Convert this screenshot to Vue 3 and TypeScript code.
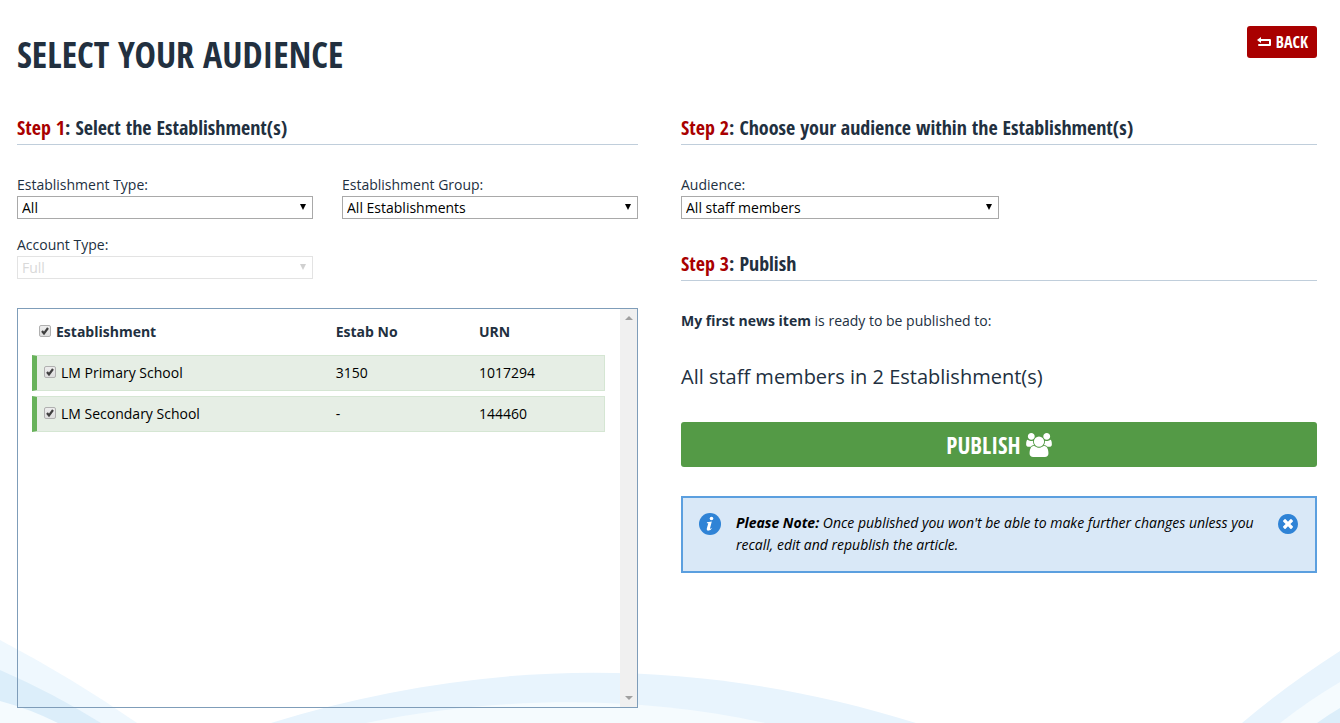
<script setup lang="ts">
import { computed, ref } from 'vue'

interface Establishment {
  name: string
  estabNo: string
  urn: string
  selected: boolean
}

const establishments = ref<Establishment[]>([
  { name: 'LM Primary School', estabNo: '3150', urn: '1017294', selected: true },
  { name: 'LM Secondary School', estabNo: '-', urn: '144460', selected: true },
])

const establishmentType = ref('All')
const establishmentGroup = ref('All Establishments')
const accountType = ref('Full')
const audience = ref('All staff members')
const noteVisible = ref(true)

const selectedCount = computed(() => establishments.value.filter((e) => e.selected).length)
const allSelected = computed({
  get: () => establishments.value.every((e) => e.selected),
  set: (value: boolean) => establishments.value.forEach((e) => (e.selected = value)),
})
</script>

<template>
  <div class="page">
    <svg class="waves" viewBox="0 0 1340 84" preserveAspectRatio="none" aria-hidden="true">
      <path fill="#eff8fe" d="M0 1Q74 40 137 84H0Z" />
      <path fill="#dceefa" d="M0 31Q53 54 101 84H0Z" />
      <path fill="#f5fbfe" d="M0 62Q30 70 58 84H0Z" />
      <path fill="#e8f4fd" d="M271 84C480 19 695 15 916 84Z" />
      <path fill="#f5fbfe" d="M366 84C495 58 630 55 765 84Z" />
      <path fill="#e8f4fd" d="M1242 84Q1284 48 1340 12V84Z" />
      <path fill="#f5fbfe" d="M1280 84Q1308 62 1340 43V84Z" />
      <path fill="#dceefa" d="M1317 84Q1328 76 1340 69V84Z" />
    </svg>

    <header class="top">
      <h1>SELECT YOUR AUDIENCE</h1>
      <button type="button" class="back">
        <svg viewBox="0 0 14 10" width="14" height="10" aria-hidden="true">
          <path d="M3 3H13V8H2" fill="none" stroke="#fff" stroke-width="2" stroke-linejoin="round" stroke-linecap="round" />
          <path d="M4 0V6L0 3Z" fill="#fff" />
        </svg>
        <span>BACK</span>
      </button>
    </header>

    <main class="columns">
      <section>
        <h2><em>Step 1</em>: Select the Establishment(s)</h2>
        <div class="filters">
          <div class="field">
            <label for="type">Establishment Type:</label>
            <div class="select">
              <select id="type" v-model="establishmentType"><option>All</option></select>
              <svg viewBox="0 0 6 6" aria-hidden="true"><path d="M0 0H6L3 6Z" /></svg>
            </div>
          </div>
          <div class="field">
            <label for="group">Establishment Group:</label>
            <div class="select">
              <select id="group" v-model="establishmentGroup"><option>All Establishments</option></select>
              <svg viewBox="0 0 6 6" aria-hidden="true"><path d="M0 0H6L3 6Z" /></svg>
            </div>
          </div>
          <div class="field">
            <label for="account">Account Type:</label>
            <div class="select disabled">
              <select id="account" v-model="accountType" disabled><option>Full</option></select>
              <svg viewBox="0 0 6 6" aria-hidden="true"><path d="M0 0H6L3 6Z" /></svg>
            </div>
          </div>
        </div>

        <div class="list">
          <div class="list-body">
            <table>
              <thead>
                <tr>
                  <th class="name">
                    <label><input v-model="allSelected" type="checkbox" /><span>Establishment</span></label>
                  </th>
                  <th class="number">Estab No</th>
                  <th>URN</th>
                </tr>
              </thead>
              <tbody>
                <tr v-for="item in establishments" :key="item.urn">
                  <td>
                    <label><input v-model="item.selected" type="checkbox" /><span>{{ item.name }}</span></label>
                  </td>
                  <td>{{ item.estabNo }}</td>
                  <td>{{ item.urn }}</td>
                </tr>
              </tbody>
            </table>
          </div>
          <div class="scrollbar" aria-hidden="true">
            <svg viewBox="0 0 8 4"><path d="M0 4L4 0L8 4Z" /></svg>
            <svg viewBox="0 0 8 4"><path d="M0 0L4 4L8 0Z" /></svg>
          </div>
        </div>
      </section>

      <section>
        <h2><em>Step 2</em>: Choose your audience within the Establishment(s)</h2>
        <div class="field audience">
          <label for="audience">Audience:</label>
          <div class="select">
            <select id="audience" v-model="audience"><option>All staff members</option></select>
            <svg viewBox="0 0 6 6" aria-hidden="true"><path d="M0 0H6L3 6Z" /></svg>
          </div>
        </div>

        <h2 class="third"><em>Step 3</em>: Publish</h2>
        <p class="ready"><strong>My first news item</strong> is ready to be published to:</p>
        <p class="target">{{ audience }} in {{ selectedCount }} Establishment(s)</p>
        <button type="button" class="publish">
          <span>PUBLISH</span>
          <svg viewBox="0 0 1920 1792" width="26" height="24" aria-hidden="true">
            <path fill="#fff" d="M593 896q-162 5-265 128h-134q-82 0-138-40.500t-56-118.500q0-353 124-353 6 0 43.500 21t97.500 42.500 119 21.500q67 0 133-23-5 37-5 66 0 139 81 256zm1071 637q0 120-73 189.500t-194 69.500h-874q-121 0-194-69.500t-73-189.500q0-53 3.500-103.500t14-109 26.500-108.500 43-97.500 62-81 85.500-53.500 111.500-20q10 0 43 21.500t73 48 107 48 135 21.500 135-21.500 107-48 73-48 43-21.500q61 0 111.500 20t85.500 53.500 62 81 43 97.500 26.500 108.500 14 109 3.500 103.500zm-1024-1277q0 106-75 181t-181 75-181-75-75-181 75-181 181-75 181 75 75 181zm704 384q0 159-112.500 271.500t-271.500 112.500-271.500-112.500-112.500-271.500 112.500-271.500 271.500-112.500 271.500 112.500 112.500 271.500zm576 225q0 78-56 118.500t-138 40.500h-134q-103-123-265-128 81-117 81-256 0-29-5-66 66 23 133 23 59 0 119-21.500t97.500-42.500 43.500-21q124 0 124 353zm-128-609q0 106-75 181t-181 75-181-75-75-181 75-181 181-75 181 75 75 181z" />
          </svg>
        </button>

        <div v-if="noteVisible" class="note" role="note">
          <svg viewBox="0 0 22 22" width="22" height="22" aria-hidden="true">
            <circle cx="11" cy="11" r="11" fill="#2f83d6" />
            <circle cx="12.500" cy="5.500" r="1.800" fill="#fff" />
            <path d="M8 9.200L12.800 8.500L11 15.300Q11 16.200 13.300 14.800Q11.800 17.800 9 17.800Q7.300 17.600 7.800 15.500L9.300 10.300H7.800Z" fill="#fff" />
          </svg>
          <p><strong>Please Note:</strong> Once published you won't be able to make further changes unless you recall, edit and republish the article.</p>
          <button type="button" aria-label="Dismiss note" @click="noteVisible = false">
            <svg viewBox="128 128 1536 1536" width="20" height="20" aria-hidden="true">
              <circle cx="896" cy="896" r="700" fill="#fff" />
              <path fill="#2f83d6" d="M1277 1122q0-26-19-45l-181-181 181-181q19-19 19-45 0-27-19-46l-90-90q-19-19-46-19-26 0-45 19l-181 181-181-181q-19-19-45-19-27 0-46 19l-90 90q-19 19-19 46 0 26 19 45l181 181-181 181q-19 19-19 45 0 27 19 46l90 90q19 19 46 19 26 0 45-19l181-181 181 181q19 19 45 19 27 0 46-19l90-90q19-19 19-46zm387-226q0 209-103 385.500t-279.500 279.500-385.500 103-385.500-103-279.500-279.500-103-385.500 103-385.500 279.500-279.500 385.500-103 385.500 103 279.500 279.500 103 385.500z" />
            </svg>
          </button>
        </div>
      </section>
    </main>
  </div>
</template>

<style>
body {
  margin: 0;
  background: #fff;
}
</style>

<style scoped>
* {
  box-sizing: border-box;
}

.page {
  position: relative;
  min-height: 100vh;
  padding: 26px 23px 15px 17px;
  font: 14px/20px 'Open Sans', 'Noto Sans', sans-serif;
  color: #22303f;
}

.waves {
  position: absolute;
  left: 0;
  bottom: 0;
  width: 100%;
  height: 84px;
}

.top,
.columns {
  position: relative;
}

.top {
  display: flex;
  justify-content: space-between;
  align-items: flex-start;
}

h1,
h2,
.back,
.publish {
  font-family: 'Open Sans Condensed', 'Liberation Sans Narrow', 'Open Sans', sans-serif;
  font-weight: 700;
}

h1 {
  margin: 4px 0 0;
  font-size: 36px;
  line-height: 50px;
}

h2 {
  margin: 0;
  padding-bottom: 2px;
  border-bottom: 1px solid #c0cedb;
  font-size: 20px;
  line-height: 28px;
  white-space: nowrap;
}

h2 em {
  font-style: normal;
  color: #a90000;
}

button {
  display: flex;
  align-items: center;
  justify-content: center;
  margin: 0;
  padding: 0;
  border: 0;
  color: #fff;
  cursor: pointer;
}

.back {
  gap: 5px;
  height: 32px;
  padding: 0 9px 0 10px;
  border-radius: 3px;
  background: #a90000;
  font-size: 16px;
}

.columns {
  display: grid;
  grid-template-columns: minmax(0, 621fr) minmax(0, 636fr);
  column-gap: 43px;
  margin-top: 34px;
}

.filters {
  display: grid;
  grid-template-columns: 1fr 1fr;
  gap: 16px 29px;
  margin-top: 30px;
}

.field {
  display: flex;
  flex-direction: column;
}

.field label {
  height: 21px;
}

.audience {
  width: 50%;
  margin-top: 30px;
}

.select {
  position: relative;
}

select {
  display: block;
  width: 100%;
  height: 23px;
  padding: 0 4px;
  border: 1px solid #a9a9a9;
  border-radius: 0;
  background: #fff;
  color: #000;
  font: inherit;
  appearance: none;
}

.select svg {
  position: absolute;
  top: 8px;
  right: 7px;
  width: 6px;
  height: 6px;
  pointer-events: none;
}

.disabled select {
  border-color: #e3e3e3;
  color: #d9d9d9;
  opacity: 1;
}

.disabled svg {
  fill: #d0d0d0;
}

.list {
  display: flex;
  height: 400px;
  margin-top: 29px;
  border: 1px solid #7f9db9;
}

.list-body {
  flex: 1;
  padding: 0 15px 0 14px;
}

table {
  width: 100%;
  border-collapse: separate;
  border-spacing: 0 5px;
  table-layout: fixed;
}

th,
td {
  height: 36px;
  padding: 0;
  text-align: left;
}

.name {
  width: 53%;
  padding-left: 7px;
}

.number {
  width: 25%;
}

td {
  border: 1px solid #d5e6d3;
  border-width: 1px 0;
  background: #e6eee5;
  color: #000;
}

td:first-child {
  padding-left: 7px;
  border-left: 5px solid #68b25b;
}

td:last-child {
  border-right-width: 1px;
}

th label,
td label {
  display: flex;
  align-items: center;
  gap: 5px;
}

input {
  width: 12px;
  height: 12px;
  margin: 0 0 2px;
  border: 1px solid #b0b0b0;
  border-radius: 2px;
  background: linear-gradient(#ededed, #dedede);
  appearance: none;
}

input:checked {
  background: url("data:image/svg+xml,%3Csvg xmlns='http://www.w3.org/2000/svg' viewBox='0 0 10 10'%3E%3Cpath d='M2 5L4 7.500L8 2' fill='none' stroke='%23404040' stroke-width='2.200'/%3E%3C/svg%3E") center / 10px 10px no-repeat, linear-gradient(#ededed, #dedede);
}

.scrollbar {
  display: flex;
  flex-direction: column;
  align-items: center;
  justify-content: space-between;
  width: 17px;
  padding: 7px 0;
  background: #f0f0f0;
}

.scrollbar svg {
  width: 8px;
  height: 4px;
  fill: #a0a0a0;
}

.third {
  margin-top: 31px;
}

p {
  margin: 0;
}

.ready {
  margin-top: 30px;
}

.target {
  margin-top: 32px;
  font-size: 20px;
  line-height: 28px;
}

.publish {
  gap: 5px;
  width: 100%;
  height: 45px;
  margin-top: 31px;
  border-radius: 3px;
  background: #549a46;
  font-size: 23px;
}

.note {
  display: flex;
  align-items: flex-start;
  margin-top: 29px;
  padding: 14px 17px 15px 16px;
  border: 2px solid #5b9fdf;
  background: #d9e8f7;
  color: #000;
}

.note > svg {
  flex: none;
  margin-top: 1px;
}

.note > button {
  flex: none;
  margin-top: 2px;
  background: none;
}

.note p {
  flex: 1;
  margin: 0 16px 0 15px;
  font-style: italic;
  line-height: 22px;
}
</style>
